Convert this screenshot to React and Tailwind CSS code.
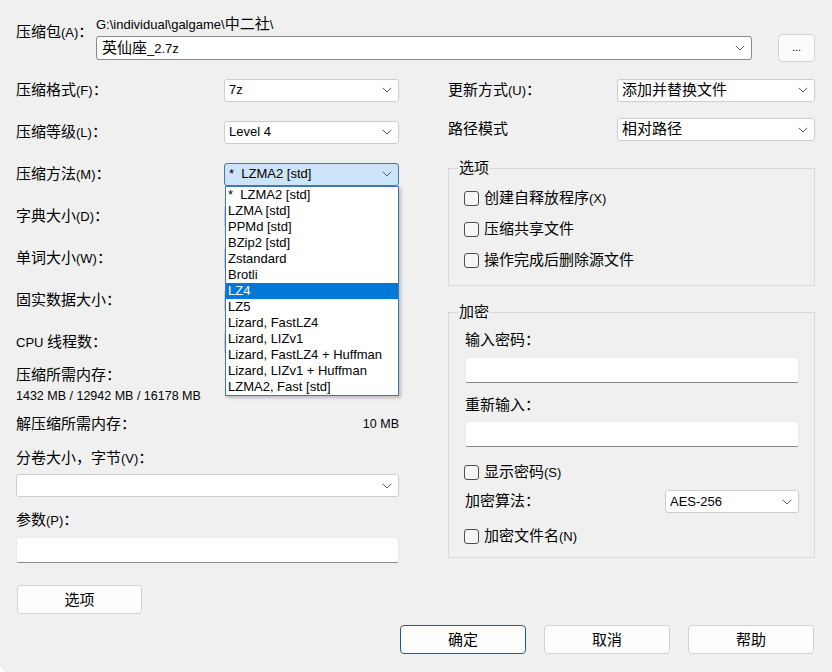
import React from "react";

const CJK = /([\u2E80-\u9FFF\uFF00-\uFFEF\u3000-\u303F]+)/;

function T({ children }) {
  const parts = String(children).split(CJK);
  return parts.map((p, i) =>
    p === "" ? null : CJK.test(p) ? (
      <span key={i} className="text-[15px]">{p}</span>
    ) : (
      <span key={i}>{p}</span>
    )
  );
}

function Chevron() {
  return (
    <svg width="10" height="6" viewBox="0 0 10 6" className="shrink-0">
      <path d="M0.8 0.8 L5 5 L9.2 0.8" fill="none" stroke="#5f5f5f" strokeWidth="1" />
    </svg>
  );
}

function Combo({ value, className = "", box = "bg-white border-[#cdcdcd]" }) {
  return (
    <div className={`flex items-center h-[23px] border rounded-[3px] pl-[4px] pr-[6px] ${box} ${className}`}>
      <span className="flex-1 whitespace-pre truncate">
        <T>{value}</T>
      </span>
      <Chevron />
    </div>
  );
}

function Check({ label, className = "" }) {
  return (
    <div className={`flex items-center ${className}`}>
      <div className="w-[15px] h-[15px] border border-[#4e4e4e] rounded-[3px] bg-[#f6f6f6] shrink-0" />
      <span className="ml-[5px]">
        <T>{label}</T>
      </span>
    </div>
  );
}

function Input({ className = "" }) {
  return (
    <div className={`h-[26px] bg-white border border-[#ebebeb] border-b-[#8a8a8a] rounded-[3px] ${className}`} />
  );
}

function Button({ label, className = "" }) {
  return (
    <div className={`flex items-center justify-center h-[29px] bg-[#fdfdfd] border rounded-[4px] ${className}`}>
      <T>{label}</T>
    </div>
  );
}

const methods = [
  "*  LZMA2 [std]",
  "LZMA [std]",
  "PPMd [std]",
  "BZip2 [std]",
  "Zstandard",
  "Brotli",
  "LZ4",
  "LZ5",
  "Lizard, FastLZ4",
  "Lizard, LIZv1",
  "Lizard, FastLZ4 + Huffman",
  "Lizard, LIZv1 + Huffman",
  "LZMA2, Fast [std]",
];

function Row({ label, children, h = "h-[42px]" }) {
  return (
    <div className={`flex items-center justify-between ${h}`}>
      <span>
        <T>{label}</T>
      </span>
      {children}
    </div>
  );
}

export default function App() {
  return (
    <div className="w-[832px] h-[672px] bg-[#f0f0f0] rounded-bl-[8px] text-black text-[13px] leading-[18px] font-['Liberation_Sans','Noto_Sans_CJK_SC',sans-serif] flex flex-col pt-[15px] pl-[16px] pr-[17px] overflow-hidden">
      {/* top block */}
      <div className="flex items-start">
        <div className="w-[80px] pt-[8px]">
          <T>压缩包(A)：</T>
        </div>
        <div className="flex flex-col w-[656px]">
          <div className="h-[18px]">
            <T>{"G:\\individual\\galgame\\中二社\\"}</T>
          </div>
          <Combo
            value="英仙座_2.7z"
            className="mt-[3px] h-[24px] pl-[5px]"
            box="bg-white border-[#8a8a8a] rounded-[2px]"
          />
        </div>
        <div className="ml-[26px] mt-[19px] w-[37px] h-[28px] bg-[#fbfbfb] border border-[#d3d3d3] rounded-[4px] flex items-center justify-center text-[11px] leading-none pb-[2px]">
          ...
        </div>
      </div>

      {/* columns */}
      <div className="flex mt-[7px]">
        {/* left column */}
        <div className="w-[383px] flex flex-col">
          <Row label="压缩格式(F)：">
            <Combo value="7z" className="w-[175px]" />
          </Row>
          <Row label="压缩等级(L)：">
            <Combo value="Level 4" className="w-[175px]" />
          </Row>
          <Row label="压缩方法(M)：">
            <div className="relative z-10">
              <Combo value="*  LZMA2 [std]" className="w-[175px] pl-[4px]" box="bg-[#cce4f7] border-[#3c7bbb]" />
              <div className="absolute top-full left-[1px] w-[174px] bg-white border border-[#3c7bbb] shadow-[2px_2px_3px_rgba(0,0,0,0.22)] flex flex-col">
                {methods.map((m, i) => (
                  <div
                    key={m}
                    className={`h-[16px] leading-[16px] pl-[2px] whitespace-pre ${i === 6 ? "bg-[#0078d7] text-white" : ""}`}
                  >
                    {m}
                  </div>
                ))}
              </div>
            </div>
          </Row>
          <Row label="字典大小(D)：">
            <Combo value="" className="w-[175px]" />
          </Row>
          <Row label="单词大小(W)：">
            <Combo value="" className="w-[175px]" />
          </Row>
          <Row label="固实数据大小：">
            <Combo value="" className="w-[175px]" />
          </Row>
          <Row label="CPU 线程数：">
            <Combo value="" className="w-[175px]" />
          </Row>
          <div className="mt-[3px] h-[18px]">
            <T>压缩所需内存：</T>
          </div>
          <div className="mt-[4px] h-[16px] leading-[16px] text-[12.5px]">1432 MB / 12942 MB / 16178 MB</div>
          <div className="mt-[11px] h-[18px] flex justify-between">
            <span>
              <T>解压缩所需内存：</T>
            </span>
            <span className="text-[12.5px]">10 MB</span>
          </div>
          <div className="mt-[16px] h-[18px]">
            <T>分卷大小，字节(V)：</T>
          </div>
          <Combo value="" className="mt-[7px] w-full" />
          <div className="mt-[14px] h-[18px]">
            <T>参数(P)：</T>
          </div>
          <Input className="mt-[8px]" />
          <Button label="选项" className="mt-[22px] ml-[1px] w-[125px] border-[#d3d3d3]" />
        </div>

        {/* right column */}
        <div className="ml-[49px] w-[367px] flex flex-col">
          <Row label="更新方式(U)：">
            <Combo value="添加并替换文件" className="w-[198px]" />
          </Row>
          <Row label="路径模式" h="h-[37px]">
            <Combo value="相对路径" className="w-[198px]" />
          </Row>

          <fieldset className="mt-[11px] border border-[#d9d9d9] pl-[15px] pr-[15px] pt-[6px] pb-[9px]">
            <legend className="-ml-[6px] px-[1px] h-[18px]">
              <T>选项</T>
            </legend>
            <Check label="创建自释放程序(X)" className="h-[31px]" />
            <Check label="压缩共享文件" className="h-[31px]" />
            <Check label="操作完成后删除源文件" className="h-[31px]" />
          </fieldset>

          <fieldset className="mt-[17px] border border-[#d9d9d9] pl-[16px] pr-[15px] pb-[12px] flex flex-col">
            <legend className="-ml-[7px] px-[1px] h-[18px]">
              <T>加密</T>
            </legend>
            <div className="mt-[10px] h-[18px]">
              <T>输入密码：</T>
            </div>
            <Input className="mt-[8px]" />
            <div className="mt-[13px] h-[18px]">
              <T>重新输入：</T>
            </div>
            <Input className="mt-[7px]" />
            <Check label="显示密码(S)" className="mt-[16px] h-[18px] -ml-[1px]" />
            <div className="mt-[9px] h-[23px] flex items-center justify-between">
              <span>
                <T>加密算法：</T>
              </span>
              <Combo value="AES-256" className="w-[134px]" />
            </div>
            <Check label="加密文件名(N)" className="mt-[14px] h-[18px] -ml-[1px]" />
          </fieldset>
        </div>
      </div>

      {/* bottom buttons */}
      <div className="flex justify-end gap-[18px] mt-[11px] pr-[1px]">
        <Button label="确定" className="w-[126px] border-[#1061a8]" />
        <Button label="取消" className="w-[126px] border-[#d3d3d3]" />
        <Button label="帮助" className="w-[126px] border-[#d3d3d3]" />
      </div>
    </div>
  );
}
